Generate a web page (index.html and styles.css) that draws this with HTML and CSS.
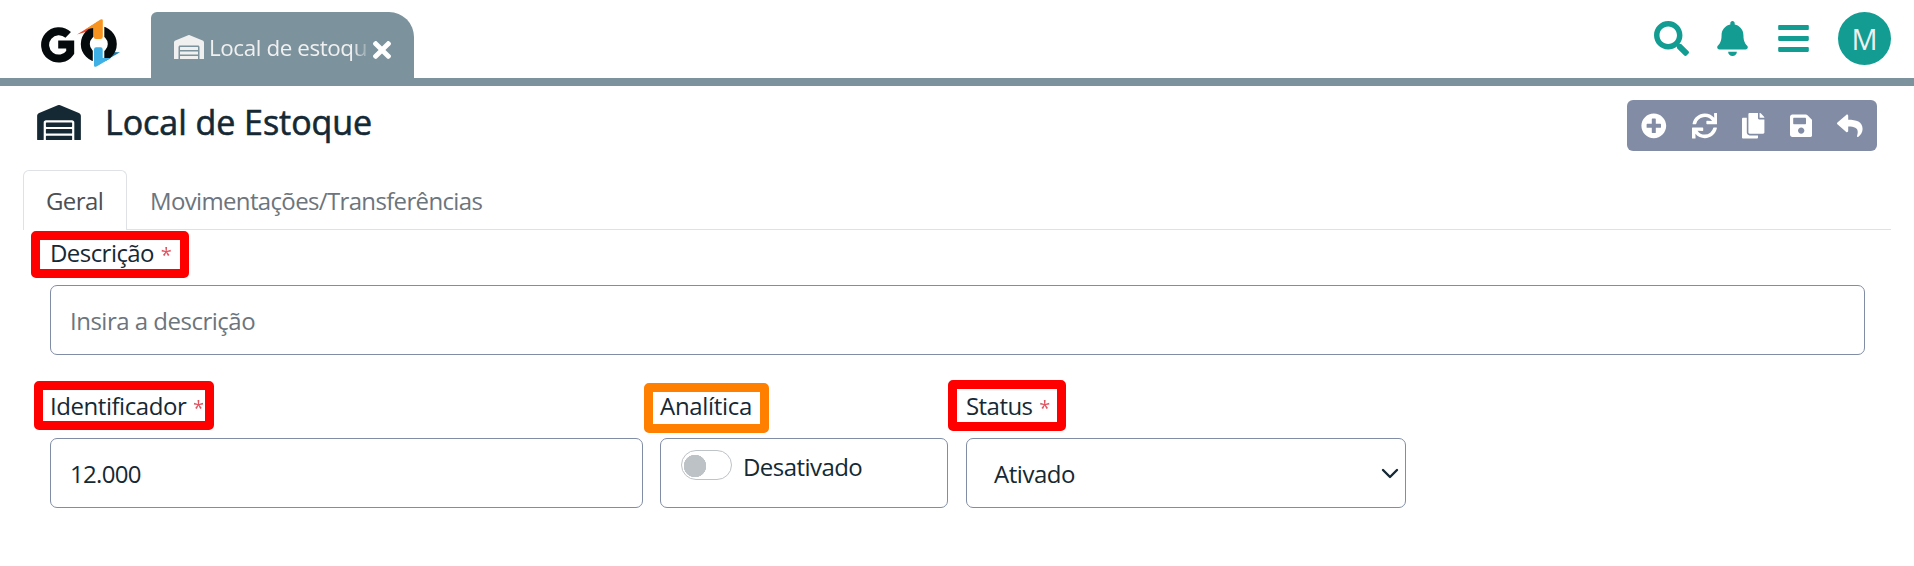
FILE: index.html
```html
<!DOCTYPE html>
<html lang="pt-BR">
<head>
<meta charset="utf-8">
<title>Local de Estoque</title>
<link rel="stylesheet" href="styles.css">
</head>
<body>
<svg class="defs" width="0" height="0">
  <symbol id="warehouse" viewBox="0 0 640 512"><path d="M504 352H136.4c-4.4 0-8 3.6-8 8l-.1 48c0 4.4 3.6 8 8 8H504c4.4 0 8-3.6 8-8v-48c0-4.4-3.6-8-8-8zm0 96H136.1c-4.4 0-8 3.6-8 8l-.1 48c0 4.4 3.6 8 8 8h368c4.4 0 8-3.6 8-8v-48c0-4.4-3.6-8-8-8zm0-192H136.6c-4.4 0-8 3.6-8 8l-.1 48c0 4.4 3.6 8 8 8H504c4.4 0 8-3.6 8-8v-48c0-4.4-3.6-8-8-8zm106.5-139L338.4 3.7a48.15 48.15 0 0 0-36.9 0L29.5 117C11.7 124.5 0 141.9 0 161.3V504c0 4.4 3.6 8 8 8h80c4.4 0 8-3.6 8-8V256c0-17.6 14.6-32 32.6-32h382.8c18 0 32.6 14.4 32.6 32v248c0 4.4 3.6 8 8 8h80c4.4 0 8-3.6 8-8V161.3c0-19.4-11.7-36.8-29.5-44.3z"/></symbol>
</svg>

<header class="topbar">
  <svg class="logo" viewBox="0 0 80 50" width="80" height="50">
    <path d="M29 16.900A13.700 13.700 0 1 0 31 34.500V26.500H19" fill="none" stroke="#050b0d" stroke-width="8" transform="translate(-1.800 0)"/>
    <path d="M36 16.500L58 3V15L48 13Z" fill="#ee4b2b"/>
    <path d="M79 34.200L57 47V35L67 34Z" fill="#1c7fae"/>
    <ellipse cx="57.800" cy="26" rx="13.500" ry="13.500" fill="#fff" stroke="#050b0d" stroke-width="9"/>
    <path d="M52.500 6H63.300V20L61 24V28L63.300 30V45H51.800V29L54 27V24L52.500 20Z" fill="#fff"/>
    <path d="M45 11L59.500 1.600Q61.800 .5 61.800 2.500V18.500Q61.800 21 59.500 21H55Q52.700 21 52.700 18.500V10Z" fill="#f7941f"/>
    <path d="M70 40L55.500 48.400Q53 49.500 53 47.500V31.500Q53 29.300 55.200 29.300H59.500Q61.700 29.300 61.700 31.500V40Z" fill="#3fb0e6"/>
  </svg>
  <div class="window-tab">
    <svg class="window-tab__icon"><use href="#warehouse"/></svg>
    <span class="window-tab__title">Local de estoqu</span>
    <svg class="window-tab__close" viewBox="0 80 352 352"><path d="M242.720 256l100.070-100.070c12.280-12.280 12.280-32.190 0-44.480l-22.240-22.240c-12.280-12.280-32.190-12.280-44.480 0L176 189.280 75.930 89.210c-12.280-12.280-32.190-12.280-44.480 0L9.210 111.450c-12.280 12.280-12.280 32.190 0 44.480L109.280 256 9.210 356.070c-12.280 12.280-12.280 32.190 0 44.480l22.240 22.240c12.280 12.280 32.200 12.280 44.480 0L176 322.720l100.070 100.070c12.280 12.280 32.200 12.280 44.480 0l22.240-22.240c12.280-12.280 12.280-32.190 0-44.480L242.720 256z"/></svg>
  </div>
  <nav class="actions">
    <svg width="35" height="35" viewBox="0 0 512 512"><path d="M505 442.700L405.300 343c-4.500-4.500-10.600-7-17-7H372c27.600-35.300 44-79.700 44-128C416 93.100 322.900 0 208 0S0 93.100 0 208s93.100 208 208 208c48.300 0 92.700-16.400 128-44v16.300c0 6.400 2.500 12.500 7 17l99.700 99.700c9.400 9.400 24.600 9.400 33.900 0l28.300-28.300c9.400-9.400 9.400-24.600.1-34zM208 336c-70.700 0-128-57.200-128-128 0-70.700 57.200-128 128-128 70.700 0 128 57.200 128 128 0 70.700-57.200 128-128 128z"/></svg>
    <svg width="31" height="35" viewBox="0 0 448 512"><path d="M224 512c35.320 0 63.970-28.650 63.970-64H160.030c0 35.350 28.650 64 63.970 64zm215.390-149.710c-19.320-20.760-55.470-51.990-55.470-154.290 0-77.700-54.480-139.900-127.940-155.160V32c0-17.670-14.320-32-31.980-32s-31.980 14.330-31.980 32v20.840C118.560 68.100 64.080 130.300 64.080 208c0 102.300-36.150 133.530-55.470 154.290-6 6.450-8.660 14.160-8.610 21.710.11 16.400 12.980 32 32.100 32h383.800c19.120 0 32-15.600 32.100-32 .05-7.550-2.610-15.270-8.610-21.710z"/></svg>
    <svg width="31" height="35" viewBox="0 0 448 512"><path d="M16 132h416c8.837 0 16-7.163 16-16V76c0-8.837-7.163-16-16-16H16C7.163 60 0 67.163 0 76v40c0 8.837 7.163 16 16 16zm0 160h416c8.837 0 16-7.163 16-16v-40c0-8.837-7.163-16-16-16H16c-8.837 0-16 7.163-16 16v40c0 8.837 7.163 16 16 16zm0 160h416c8.837 0 16-7.163 16-16v-40c0-8.837-7.163-16-16-16H16c-8.837 0-16 7.163-16 16v40c0 8.837 7.163 16 16 16z"/></svg>
    <span class="avatar">M</span>
  </nav>
</header>

<main class="page">
  <div class="heading">
    <svg class="heading__icon"><use href="#warehouse"/></svg>
    <h1 class="heading__title">Local de Estoque</h1>
    <div class="toolbar">
      <svg width="25.600" height="25.600" viewBox="0 0 512 512"><path d="M256 8C119 8 8 119 8 256s111 248 248 248 248-111 248-248S393 8 256 8zm144 276c0 6.600-5.400 12-12 12h-92v92c0 6.600-5.400 12-12 12h-56c-6.600 0-12-5.400-12-12v-92h-92c-6.600 0-12-5.400-12-12v-56c0-6.600 5.400-12 12-12h92v-92c0-6.600 5.400-12 12-12h56c6.600 0 12 5.400 12 12v92h92c6.600 0 12 5.400 12 12v56z"/></svg>
      <svg width="25.600" height="25.600" viewBox="0 0 512 512"><path d="M440.650 12.570l4 82.770A247.160 247.160 0 0 0 255.830 8C134.730 8 33.910 94.920 12.290 209.820A12 12 0 0 0 24.090 224h49.050a12 12 0 0 0 11.670-9.260 175.910 175.910 0 0 1 317-56.940l-101.460-4.860a12 12 0 0 0-12.570 12v47.410a12 12 0 0 0 12 12H500a12 12 0 0 0 12-12V12a12 12 0 0 0-12-12h-47.370a12 12 0 0 0-11.980 12.570zM255.830 432a175.610 175.610 0 0 1-146-77.800l101.800 4.870a12 12 0 0 0 12.570-12v-47.400a12 12 0 0 0-12-12H12a12 12 0 0 0-12 12V500a12 12 0 0 0 12 12h47.350a12 12 0 0 0 12-12.600l-4.150-82.570A247.170 247.170 0 0 0 255.830 504c121.110 0 221.930-86.920 243.550-201.820a12 12 0 0 0-11.800-14.180h-49.050a12 12 0 0 0-11.670 9.260A175.860 175.860 0 0 1 255.830 432z"/></svg>
      <svg width="22.400" height="25.600" viewBox="0 0 448 512"><path d="M320 448v40c0 13.255-10.745 24-24 24H24c-13.255 0-24-10.745-24-24V120c0-13.255 10.745-24 24-24h72v296c0 30.879 25.121 56 56 56h168zm0-344V0H152c-13.255 0-24 10.745-24 24v368c0 13.255 10.745 24 24 24h272c13.255 0 24-10.745 24-24V128H344c-13.200 0-24-10.800-24-24zm120.971-31.029L375.029 7.029A24 24 0 0 0 358.059 0H352v96h96v-6.059a24 24 0 0 0-7.029-16.970z"/></svg>
      <svg width="22.400" height="25.600" viewBox="0 0 448 512"><path d="M433.941 129.941l-83.882-83.882A48 48 0 0 0 316.118 32H48C21.490 32 0 53.490 0 80v352c0 26.510 21.490 48 48 48h352c26.510 0 48-21.490 48-48V163.882a48 48 0 0 0-14.059-33.941zM224 416c-35.346 0-64-28.654-64-64 0-35.346 28.654-64 64-64s64 28.654 64 64c0 35.346-28.654 64-64 64zm96-304.520V212c0 6.627-5.373 12-12 12H76c-6.627 0-12-5.373-12-12V108c0-6.627 5.373-12 12-12h228.520c3.183 0 6.235 1.264 8.485 3.515l3.480 3.480A11.996 11.996 0 0 1 320 111.480z"/></svg>
      <svg width="25.600" height="25.600" viewBox="0 0 512 512"><path d="M8.309 189.836L184.313 37.851C199.719 24.546 224 35.347 224 56.015v80.053c160.629 1.839 288 34.032 288 186.258 0 61.441-39.581 122.309-83.333 154.132-13.653 9.931-33.111-2.533-28.077-18.631 45.344-145.012-21.507-183.510-176.590-185.742V360c0 20.700-24.300 31.453-39.687 18.164l-176.004-152c-11.071-9.562-11.086-26.753 0-36.328z"/></svg>
    </div>
  </div>

  <div class="tabs">
    <a class="tabs__item tabs__item--active">Geral</a>
    <a class="tabs__item tabs__item--wide">Movimentações/Transferências</a>
  </div>

  <form class="form">
    <div class="field field--full">
      <label class="label">Descrição <span class="req">*</span><i class="mark mark--desc"></i></label>
      <div class="control control--placeholder">Insira a descrição</div>
    </div>
    <div class="field">
      <label class="label label--id">Identificador <span class="req">*</span><i class="mark mark--id"></i></label>
      <div class="control control--number">12.000</div>
    </div>
    <div class="field">
      <label class="label label--ana">Analítica<i class="mark mark--ana"></i></label>
      <div class="control control--switch"><span class="switch"></span>Desativado</div>
    </div>
    <div class="field field--status">
      <label class="label">Status <span class="req">*</span><i class="mark mark--sta"></i></label>
      <div class="control control--select">Ativado
        <svg width="18" height="12" viewBox="0 0 18 12"><path d="M2 2l7 7 7-7" fill="none" stroke="#152935" stroke-width="2.400" stroke-linecap="round" stroke-linejoin="round"/></svg>
      </div>
    </div>
  </form>
</main>
</body>
</html>
```
FILE: styles.css
```css
* { box-sizing: border-box; }
body {
  margin: 0;
  background: #fff;
  color: #152935;
  font: 24px/36px "Open Sans", "Noto Sans", sans-serif;
  letter-spacing: -0.6px;
  overflow: hidden;
}
svg { display: block; flex: none; fill: currentColor; }
.defs { position: absolute; }

.topbar {
  display: flex;
  align-items: flex-start;
  height: 86px;
  border-bottom: 8px solid #7c929d;
  padding: 0 23px 0 41px;
}
.logo { margin-top: 18px; }
.window-tab {
  display: flex;
  align-items: center;
  width: 263px;
  height: 66px;
  margin: 12px 0 0 30px;
  padding-left: 23px;
  background: #7c929d;
  color: #f0f0f0;
  border-radius: 6px 25px 0 0;
}
.window-tab__icon { width: 30px; height: 24px; margin-top: 4px; }
.window-tab__title {
  width: 163px;
  margin: 6px 0 0 5px;
  white-space: nowrap;
  font-size: 22.4px;
  letter-spacing: -0.4px;
  -webkit-mask-image: linear-gradient(90deg, #000 88%, transparent);
  mask-image: linear-gradient(90deg, #000 88%, transparent);
}
.window-tab__close { width: 18px; height: 18px; margin: 10px 0 0 1px; color: #fff; }
.actions {
  display: flex;
  align-items: center;
  height: 53px;
  margin: 12px 0 0 auto;
  color: #139d92;
}
.actions svg:nth-child(2) { margin-left: 28px; }
.actions svg:nth-child(3) { margin: 0 29px 0 30px; }
.avatar {
  width: 53px;
  height: 53px;
  border-radius: 50%;
  background: #139d92;
  color: #f0f0f0;
  font-size: 29px;
  line-height: 54px;
  text-align: center;
  letter-spacing: 0;
}

.page { padding: 14px 23px 0; }
.heading {
  display: flex;
  height: 70px;
  padding: 0 14px;
}
.heading__icon { width: 44px; height: 35px; margin-top: 5px; }
.heading__title {
  margin: 0 0 0 24px;
  font-size: 34px;
  line-height: 45px;
  font-weight: 500;
  letter-spacing: -0.05px;
  -webkit-text-stroke: 0.6px currentColor;
  white-space: nowrap;
}
.toolbar {
  display: flex;
  gap: 25px;
  width: 250px;
  height: 51px;
  margin-left: auto;
  padding: 13px 0 0 14px;
  background: #828da5;
  color: #fff;
  border-radius: 6px;
}

.tabs {
  display: flex;
  height: 60px;
  border-bottom: 1px solid #dee2e6;
}
.tabs__item {
  height: 60px;
  padding: 12px 22px 0;
  border: 1px solid transparent;
  border-bottom: 0;
  color: #6c757d;
  white-space: nowrap;
}
.tabs__item--wide { letter-spacing: -0.65px; }
.tabs__item--active {
  width: 104px;
  background: #fff;
  color: #495057;
  border-color: #dee2e6;
  border-radius: 6px 6px 0 0;
}

.form {
  display: grid;
  grid-template-columns: 593px 288px 440px;
  column-gap: 17px;
  row-gap: 34px;
  padding: 6px 26px 0 27px;
}
.field--status { margin: 0 -1px 0 1px; }
.field--full { grid-column: 1 / -1; width: 1815px; }
.label {
  position: relative;
  display: block;
  height: 49px;
  line-height: 34px;
  letter-spacing: -0.55px;
  white-space: nowrap;
}
.label--id { letter-spacing: -0.45px; }
.label--ana { letter-spacing: -0.3px; }
.req { margin-left: 1px; color: #dc3545; font-size: 20px; line-height: 20px; opacity: .85; }
.mark {
  position: absolute;
  border: 9px solid #f00;
  border-radius: 5px;
}
.mark--desc { left: -19px; top: -5px; width: 158px; height: 47px; }
.mark--id { left: -16px; top: -8px; width: 180px; height: 49px; }
.mark--ana { left: -16px; top: -6px; width: 125px; height: 50px; border-color: #ff8000; }
.mark--sta { left: -18px; top: -9px; width: 118px; height: 51px; }
.control {
  display: flex;
  height: 70px;
  padding: 17px 20px 0 19px;
  border: 1px solid #818da5;
  border-radius: 7px;
  white-space: nowrap;
}
.control--placeholder { color: #6c757d; letter-spacing: -0.5px; }
.control--number { letter-spacing: -0.7px; }
.control--switch { padding: 10px 20px 0; letter-spacing: -0.55px; }
.control--select { padding: 17px 6px 0 27px; justify-content: space-between; letter-spacing: -0.45px; }
.control--select svg { margin-top: 12px; }
.switch {
  width: 51px;
  height: 30px;
  margin: 1px 11px 0 0;
  border: 1px solid #bec3c7;
  border-radius: 15px;
  background: radial-gradient(circle at 13px 15px, #bdc2c6 11px, transparent 11.500px);
}
```
